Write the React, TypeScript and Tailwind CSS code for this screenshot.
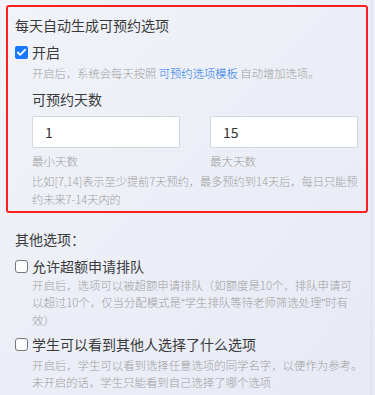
import { Check } from "lucide-react";

const font = { fontFamily: '"Noto Sans CJK SC", "Noto Sans", sans-serif' };
const quote = { fontFamily: '"Liberation Sans", sans-serif' };

function Box({ checked }: { checked?: boolean }) {
    if (checked) {
        return (
            <span className="flex h-[13px] w-[13px] shrink-0 items-center justify-center rounded-[2px] bg-[#1677ff]">
                <Check size={11} strokeWidth={4} className="text-white"/>
            </span>
        );
    }
    return <span className="h-[13px] w-[13px] shrink-0 rounded-[3px] border border-[#767676] bg-white"/>;
}

function Option({ checked, label }: { checked?: boolean, label: string }) {
    return (
        <div className="flex h-[22px] items-center gap-[4px]">
            <Box checked={checked}/>
            <span className="text-[14px] font-normal text-[#3a3a3a]">{label}</span>
        </div>
    );
}

export default function App() {
    return (
        <div className="flex h-[395px] w-[375px] overflow-hidden bg-gradient-to-br from-[#f1f3f9] to-[#e7eaf5] font-light" style={font}>
            <div className="w-[372px] border-r border-[#dde1ec] pl-[6px] pr-[3px] pt-[5px]">
                <div className="rounded-[3px] border-2 border-[#ff1f1f] pb-[3px] pl-[7px] pr-[7px] pt-[7px]">
                    <div className="h-[22px] text-[14px] font-normal leading-[22px] text-[#3a3a3a]">每天自动生成可预约选项</div>
                    <div className="mt-[5px]">
                        <Option checked label="开启"/>
                    </div>
                    <div className="pl-[17px]">
                        <p className="text-[11.3px] leading-[20px] text-[#9e9e9e]">
                            开启后，系统会每天按照 <span className="text-[#1a73e8]">可预约选项模板</span> 自动增加选项。
                        </p>
                        <div className="mt-[5px] h-[22px] text-[14px] font-normal leading-[22px] text-[#3a3a3a]">可预约天数</div>
                        <div className="mt-[6px] grid grid-cols-2 gap-[30px] pr-[1px]">
                            <div>
                                <div className="flex h-[32px] items-center rounded-[2px] border border-[#d3d7df] bg-white pl-[12px] text-[14px] font-normal text-[#333]">1</div>
                                <div className="mt-[3px] text-[11.5px] leading-[20px] text-[#9e9e9e]">最小天数</div>
                            </div>
                            <div>
                                <div className="flex h-[32px] items-center rounded-[2px] border border-[#d3d7df] bg-white pl-[12px] text-[14px] font-normal text-[#333]">15</div>
                                <div className="mt-[3px] text-[11.5px] leading-[20px] text-[#9e9e9e]">最大天数</div>
                            </div>
                        </div>
                        <p className="mt-[1px] whitespace-nowrap text-[11.2px] leading-[18px] text-[#9e9e9e]">
                            比如[7,14]表示至少提前7天预约，最多预约到14天后，每日只能预<br/>约未来7-14天内的
                        </p>
                    </div>
                </div>

                <div className="pl-[9px] pr-[7px]">
                    <div className="mt-[15px] h-[22px] text-[14px] font-normal leading-[22px] text-[#3a3a3a]">其他选项：</div>
                    <div className="mt-[5px]">
                        <Option label="允许超额申请排队"/>
                    </div>
                    <p className="whitespace-nowrap pl-[17px] text-[11.4px] leading-[17px] text-[#9e9e9e]">
                        开启后，选项可以被超额申请排队（如额度是10个，排队申请可<br/>
                        以超过10个，仅当分配模式是<span style={quote}>“</span>学生排队等待老师筛选处理<span style={quote}>”</span>时有<br/>
                        效）
                    </p>
                    <div className="mt-[4px]">
                        <Option label="学生可以看到其他人选择了什么选项"/>
                    </div>
                    <p className="mt-[2px] whitespace-nowrap pl-[17px] text-[11.4px] leading-[17px] text-[#9e9e9e]">
                        开启后，学生可以看到选择任意选项的同学名字，以便作为参考。<br/>
                        未开启的话，学生只能看到自己选择了哪个选项
                    </p>
                </div>
            </div>
        </div>
    );
}
